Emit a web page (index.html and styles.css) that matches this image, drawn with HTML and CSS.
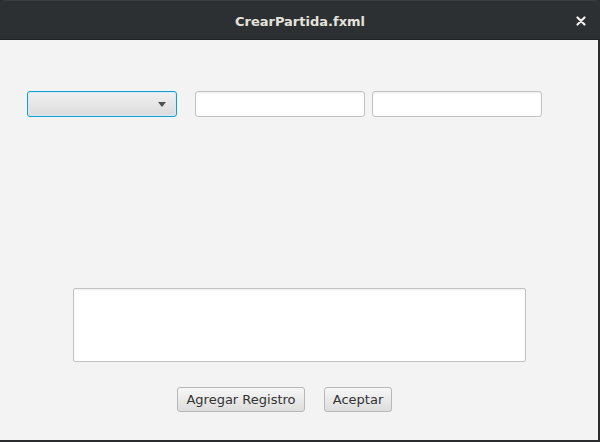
FILE: index.html
```html
<!DOCTYPE html>
<html>
<head>
<meta charset="utf-8">
<link rel="stylesheet" href="styles.css">
</head>
<body>
<div class="window">
  <div class="titlebar">
    <span class="title">CrearPartida.fxml</span>
    <svg class="close" width="10" height="10" viewBox="0 0 10 10"><path d="M1.5 1.5 L8.5 8.5 M8.5 1.5 L1.5 8.5" stroke="#f0f0f0" stroke-width="2.2" stroke-linecap="round"/></svg>
  </div>
  <div class="content">
    <div class="row">
      <div class="combo"><span class="arrow"></span></div>
      <input class="field f1" type="text">
      <input class="field f2" type="text">
    </div>
    <textarea class="area"></textarea>
    <div class="buttons">
      <button class="btn b1">Agregar Registro</button>
      <button class="btn b2">Aceptar</button>
    </div>
  </div>
</div>
</body>
</html>
```
FILE: styles.css
```css
html, body {
  margin: 0;
  padding: 0;
  width: 600px;
  height: 442px;
  background: #2a2c2e;
  overflow: hidden;
}
.window {
  width: 600px;
  height: 442px;
  display: flex;
  flex-direction: column;
}
.titlebar {
  flex: none;
  height: 40px;
  box-sizing: border-box;
  background: #2c3033;
  border-top: 1px solid #3a3d40;
  border-bottom: 1px solid #1e2022;
  border-radius: 6px 6px 0 0;
  position: relative;
  display: flex;
  align-items: center;
  justify-content: center;
}
.title {
  font-family: "DejaVu Sans", sans-serif;
  font-weight: bold;
  font-size: 13px;
  color: #e4e2dc;
  margin-top: 2px;
}
.close {
  position: absolute;
  right: 14px;
  top: 15px;
}
.content {
  width: 598px;
  height: 400px;
  background: #f3f3f3;
  box-sizing: border-box;
  padding-top: 51px;
  display: flex;
  flex-direction: column;
}
.row {
  display: flex;
  margin-left: 27px;
  height: 26px;
}
.combo {
  width: 150px;
  height: 26px;
  box-sizing: border-box;
  border: 1.5px solid #0f9fd6;
  border-radius: 3px;
  background: linear-gradient(#f1f1f1, #dbdbdb);
  box-shadow: inset 0 0 0 1px #d6eaf5;
  position: relative;
}
.arrow {
  position: absolute;
  right: 10px;
  top: 10px;
  width: 0;
  height: 0;
  border-left: 4px solid transparent;
  border-right: 4px solid transparent;
  border-top: 5px solid #505050;
}
.field {
  width: 170px;
  height: 26px;
  box-sizing: border-box;
  margin: 0;
  padding: 0;
  border: 1px solid #c3c3c3;
  border-radius: 3px;
  background: #ffffff;
  box-shadow: inset 0 1px 2px #ececec;
  outline: none;
}
.f1 { margin-left: 18px; }
.f2 { margin-left: 7px; }
.area {
  margin: 171px 0 0 73px;
  width: 453px;
  height: 74px;
  box-sizing: border-box;
  border: 1px solid #c3c3c3;
  border-radius: 2px;
  background: #ffffff;
  box-shadow: inset 0 1px 2px #ececec;
  resize: none;
  padding: 0;
  outline: none;
}
.buttons {
  display: flex;
  margin: 25px 0 0 177px;
  gap: 19px;
}
.btn {
  height: 25px;
  box-sizing: border-box;
  margin: 0;
  border: 1px solid #b8b8b8;
  border-radius: 3px;
  background: linear-gradient(#f7f7f7, #dddddd);
  font-family: "DejaVu Sans", sans-serif;
  font-size: 13px;
  color: #333333;
  padding: 0;
  line-height: 22px;
  text-align: center;
}
.b1 { width: 128px; }
.b2 { width: 68px; }
```
